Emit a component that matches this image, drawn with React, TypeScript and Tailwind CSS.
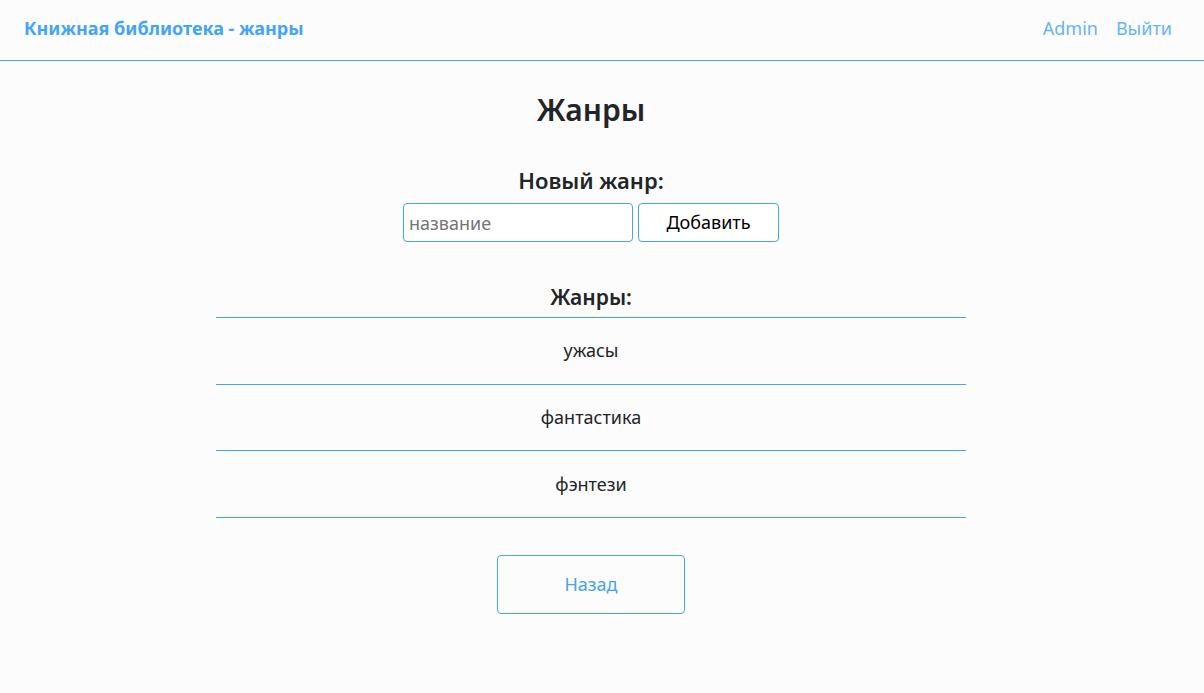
const genres = ['ужасы', 'фантастика', 'фэнтези'];

export default function App() {
  return (
    <main className="min-h-screen bg-[#fcfcfc] text-[#212529] font-['Noto_Sans',sans-serif]">
      {/* HEADER */}
      <header className="h-[61px] flex items-center justify-between px-6 border-b border-[#42a5f5]">
        <span className="text-[18px] font-bold text-[#42a5f5] -mt-[3px]">Книжная библиотека - жанры</span>
        <nav className="flex gap-[18px] text-[18px] text-[#64b5f6] pr-2 -mt-[4px]">
          <a href="#">Admin</a>
          <a href="#">Выйти</a>
        </nav>
      </header>

      {/* CONTENT */}
      <section className="flex flex-col items-center pr-[22px]">
        <h1 className="mt-[26px] text-[30px] font-semibold leading-[46px]">Жанры</h1>

        <h2 className="mt-[31px] text-[22px] font-semibold leading-[32px]">Новый жанр:</h2>
        <form className="mt-[7px] flex gap-[5px]">
          <input
            placeholder="название"
            className="w-[230px] h-[39px] px-[5px] bg-white border border-[#42a5f5] rounded-[4px] text-[18px] placeholder:text-[#757575] outline-none"
          />
          <button
            type="button"
            className="w-[141px] h-[39px] bg-white border border-[#42a5f5] rounded-[4px] text-[18px] text-black"
          >
            Добавить
          </button>
        </form>

        <h2 className="mt-[39px] text-[21px] font-semibold leading-[32px]">Жанры:</h2>
        <ul className="mt-[4px] w-[750px] border-t border-[#42a5f5]">
          {genres.map((g) => (
            <li key={g} className="h-[66.7px] flex items-center justify-center border-b border-[#42a5f5] text-[18px]">
              {g}
            </li>
          ))}
        </ul>

        <button
          type="button"
          className="mt-[37px] w-[188px] h-[59px] border border-[#42a5f5] rounded-[4px] text-[18px] text-[#42a5f5]"
        >
          Назад
        </button>
      </section>
    </main>
  );
}
